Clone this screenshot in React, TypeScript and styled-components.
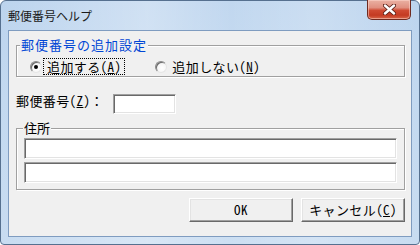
import React from "react";
import styled, { createGlobalStyle } from "styled-components";

const Global = createGlobalStyle`
  html, body { margin: 0; padding: 0; background: #ffffff; }
  body {
    font-family: "Noto Sans CJK JP", sans-serif;
    font-feature-settings: "hwid" 1;
    font-size: 13px;
    letter-spacing: 0.4px;
    color: #000;
  }
  * { box-sizing: border-box; }
`;

const Window = styled.div`
  width: 420px;
  height: 245px;
  display: flex;
  flex-direction: column;
  border: 1px solid #56708f;
  border-radius: 6px 6px 4px 4px;
  padding: 0 7px 7px;
  background:
    linear-gradient(90deg, rgba(255,255,255,0) 0%, rgba(255,255,255,0.3) 35%, rgba(255,255,255,0.08) 55%, rgba(255,255,255,0.22) 75%, rgba(255,255,255,0) 100%),
    linear-gradient(180deg, #bcd4ee 0%, #c3d9f0 40%, #c8dcf1 100%);
`;

const TitleBar = styled.div`
  height: 29px;
  display: flex;
  align-items: flex-start;
  justify-content: space-between;
`;

const Title = styled.div`
  margin-top: 7px;
  font-size: 12px;
  line-height: 16px;
  letter-spacing: 0;
  color: #1b1b1b;
  font-feature-settings: normal;
`;

const CloseButton = styled.div`
  width: 44px;
  height: 20px;
  margin-top: -1px;
  margin-right: 1px;
  border: 1px solid #6e2a20;
  border-top: none;
  border-radius: 0 0 5px 5px;
  display: flex;
  align-items: center;
  justify-content: center;
  background: linear-gradient(180deg, #eab1a3 0%, #e09080 40%, #cf4a32 55%, #c43a22 80%, #d8664a 100%);
  box-shadow: inset 0 0 0 1px rgba(255, 220, 210, 0.5);
`;

const Client = styled.div`
  flex: 1;
  display: flex;
  flex-direction: column;
  background: #f0f0f0;
  border: 1px solid #7f9cc0;
  padding: 7px 6px 0 7px;
`;

const Group = styled.fieldset<{ $bottom: number; $top?: number }>`
  margin: ${p => p.$top ?? 0}px 0 0;
  padding: ${p => (p.$top ? 3 : 6)}px 7px ${p => p.$bottom}px 7px;
  min-width: 0;
  border: 1px solid #a0a0a0;
  box-shadow: inset 1px 1px 0 #ffffff, 1px 1px 0 #ffffff;
`;

const Legend = styled.legend<{ $blue?: boolean }>`
  padding: 0 1px;
  margin-left: ${p => (p.$blue ? -4 : -1)}px;
  font-size: 13px;
  line-height: 14px;
  letter-spacing: ${p => (p.$blue ? 1 : 0)}px;
  color: ${p => (p.$blue ? "#0046d5" : "#000")};
  background: #f0f0f0;
`;

const RadioRow = styled.div`
  height: 17px;
  display: flex;
  align-items: center;
  gap: 30px;
  padding-left: 6px;
`;

const RadioItem = styled.label`
  display: flex;
  align-items: center;
  gap: 1px;
`;

const RadioCircle = styled.span<{ $checked?: boolean }>`
  position: relative;
  flex: none;
  width: 12px;
  height: 12px;
  border-radius: 50%;
  border: 1px solid;
  border-color: #8a8a8a #e6e6e6 #e6e6e6 #8a8a8a;
  background: radial-gradient(circle at 60% 60%, #ffffff 0%, #f6f6f6 55%, #dedede 100%);
  box-shadow: inset 1px 1px 0 #6a6a6a;
  &::after {
    content: "";
    position: absolute;
    left: 3px;
    top: 3px;
    width: 4px;
    height: 4px;
    border-radius: 50%;
    background: #000;
    display: ${p => (p.$checked ? "block" : "none")};
  }
`;

const RadioText = styled.span<{ $focus?: boolean }>`
  height: 17px;
  line-height: 15px;
  padding: 0 3px;
  border: 1px dotted ${p => (p.$focus ? "#000" : "transparent")};
  white-space: nowrap;
`;

const Mn = styled.span`
  text-decoration: underline;
  text-underline-offset: 1px;
`;

const FullWidth = styled.span`
  font-feature-settings: normal;
`;

const FieldRow = styled.div`
  margin-top: 16px;
  display: flex;
  align-items: flex-start;
  gap: 9px;
`;

const FieldLabel = styled.span`
  line-height: 16px;
  white-space: nowrap;
`;

const TextBox = styled.input<{ $w?: number }>`
  display: block;
  width: ${p => (p.$w ? `${p.$w}px` : "100%")};
  height: ${p => (p.$w ? 20 : 21)}px;
  margin: ${p => (p.$w ? "1px 0 0" : "0")};
  padding: 0 2px;
  font: inherit;
  background: #ffffff;
  border: 1px solid;
  border-color: #a0a0a0 #ffffff #ffffff #a0a0a0;
  box-shadow: inset 1px 1px 0 #696969, inset -1px -1px 0 #e3e3e3;
  outline: none;
`;

const AddressStack = styled.div`
  display: flex;
  flex-direction: column;
  gap: 3px;
`;

const ButtonRow = styled.div`
  margin-top: 8px;
  display: flex;
  justify-content: flex-end;
  gap: 8px;
`;

const Button = styled.div`
  width: 104px;
  height: 24px;
  display: flex;
  align-items: center;
  justify-content: center;
  background: #f0f0f0;
  border: 1px solid;
  border-color: #ffffff #696969 #696969 #ffffff;
  box-shadow: inset -1px -1px 0 #a0a0a0, inset 1px 1px 0 #e3e3e3;
  line-height: 16px;
  white-space: nowrap;
`;

const CloseGlyph = () => (
  <svg width="13" height="11" viewBox="0 0 13 11">
    <path d="M2 1.5 L11 9.5 M11 1.5 L2 9.5" stroke="#5a1f16" strokeWidth="4.2" strokeLinecap="round" />
    <path d="M2 1.5 L11 9.5 M11 1.5 L2 9.5" stroke="#ffffff" strokeWidth="2.4" strokeLinecap="round" />
  </svg>
);

export default function App() {
  return (
    <>
      <Global />
      <Window>
        <TitleBar>
          <Title>郵便番号ヘルプ</Title>
          <CloseButton>
            <CloseGlyph />
          </CloseButton>
        </TitleBar>
        <Client>
          <Group $bottom={1}>
            <Legend $blue>郵便番号の追加設定</Legend>
            <RadioRow>
              <RadioItem>
                <RadioCircle $checked />
                <RadioText $focus>
                  追加する(<Mn>A</Mn>)
                </RadioText>
              </RadioItem>
              <RadioItem>
                <RadioCircle />
                <RadioText>
                  追加しない(<Mn>N</Mn>)
                </RadioText>
              </RadioItem>
            </RadioRow>
          </Group>
          <FieldRow>
            <FieldLabel>
              郵便番号(<Mn>Z</Mn>)<FullWidth>：</FullWidth>
            </FieldLabel>
            <TextBox $w={63} readOnly defaultValue="" />
          </FieldRow>
          <Group $top={7} $bottom={6}>
            <Legend>住所</Legend>
            <AddressStack>
              <TextBox readOnly defaultValue="" />
              <TextBox readOnly defaultValue="" />
            </AddressStack>
          </Group>
          <ButtonRow>
            <Button>OK</Button>
            <Button>
              キャンセル(<Mn>C</Mn>)
            </Button>
          </ButtonRow>
        </Client>
      </Window>
    </>
  );
}
